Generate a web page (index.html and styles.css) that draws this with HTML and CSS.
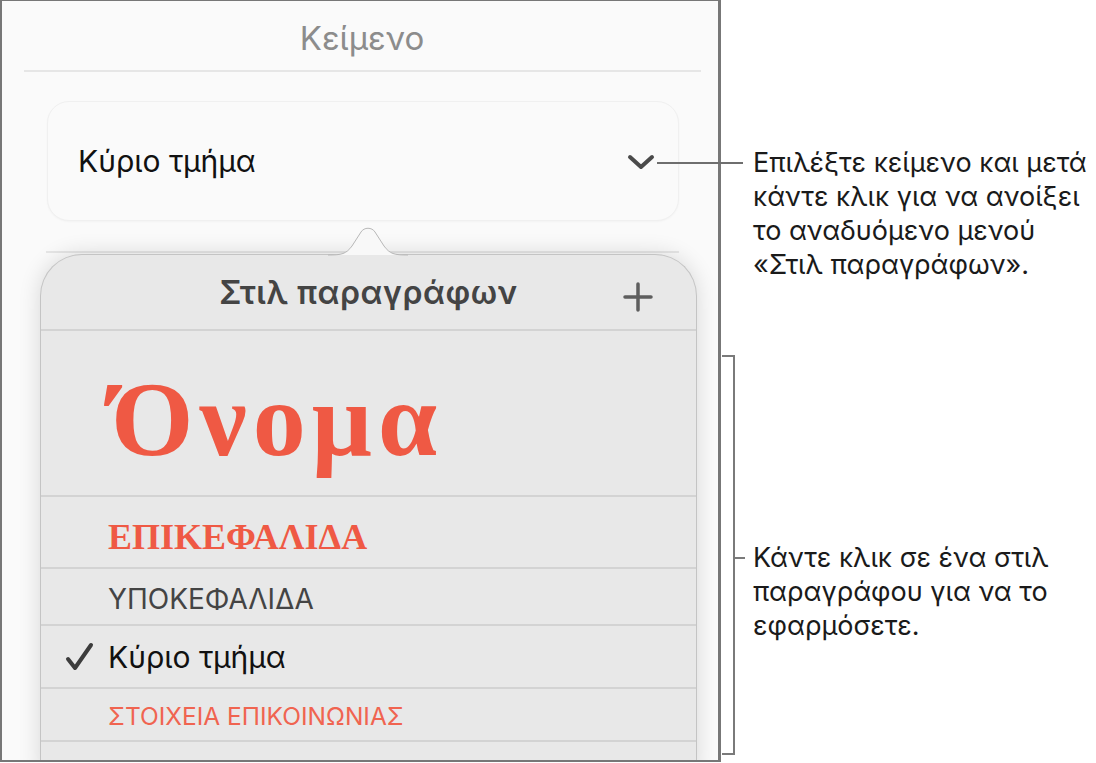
FILE: index.html
```html
<html>
    <head>
        <meta name="viewport" content="width=device-width, initial-scale=1">
        <link rel="stylesheet" href="styles.css">
    </head>

    <body>
        <div class="page">
            <div class="panel">
                <h3 class="title">Κείμενο</h3>
                <div class="rule"></div>

                <div class="picker">
                    <span>Κύριο τμήμα</span>
                    <svg class="chevron" width="30" height="18" viewBox="0 0 30 18">
                        <polyline points="4,4 15,14 26,4" fill="none" stroke="#4a4a4a" stroke-width="4" stroke-linecap="round" stroke-linejoin="round"/>
                    </svg>
                </div>
                <div class="rule rule-low"></div>

                <div class="popover">
                    <svg class="popover-tip" width="80" height="30" viewBox="0 0 80 30">
                        <path d="M0,29 C14,29 18,28 24,20 L33,6 C36,1 44,1 47,6 L56,20 C62,28 66,29 80,29" fill="#f8f8f8" stroke="#b8b8b8" stroke-width="1"/>
                    </svg>
                    <div class="popover-head">
                        <span>Στιλ παραγράφων</span>
                        <svg class="plus" width="32" height="32" viewBox="0 0 32 32">
                            <path d="M16,3 V29 M3,16 H29" stroke="#5e5e5e" stroke-width="3.5" stroke-linecap="round"/>
                        </svg>
                    </div>
                    <div class="style-row row-name"><span class="name">Όνομα</span></div>
                    <div class="style-row row-heading"><span class="heading">ΕΠΙΚΕΦΑΛΙΔΑ</span></div>
                    <div class="style-row row-sub"><span class="sub">ΥΠΟΚΕΦΑΛΙΔΑ</span></div>
                    <div class="style-row row-body">
                        <svg class="check" width="30" height="30" viewBox="0 0 30 30">
                            <polyline points="3,17 10,26 26,3" fill="none" stroke="#3c3c3c" stroke-width="4" stroke-linecap="round" stroke-linejoin="round"/>
                        </svg>
                        <span class="body-text">Κύριο τμήμα</span>
                    </div>
                    <div class="style-row row-contact"><span class="contact">ΣΤΟΙΧΕΙΑ ΕΠΙΚΟΙΝΩΝΙΑΣ</span></div>
                    <div class="style-row row-more"></div>
                </div>
            </div>

            <div class="notes">
                <div class="note note-top">
                    <div class="leader"></div>
                    <p>Επιλέξτε κείμενο και μετά<br>κάντε κλικ για να ανοίξει<br>το αναδυόμενο μενού<br>«Στιλ παραγράφων».</p>
                </div>
                <div class="note note-bracket">
                    <div class="bracket"></div>
                    <div class="note-body">
                        <div class="tick"></div>
                        <p>Κάντε κλικ σε ένα στιλ<br>παραγράφου για να το<br>εφαρμόσετε.</p>
                    </div>
                </div>
            </div>
        </div>
    </body>
</html>
```

FILE: styles.css
```css
* {
  box-sizing: border-box;
}

body {
  margin: 0;
  background: #fff;
  font-family: Inter, "Liberation Sans", Arial, sans-serif;
}

.page {
  display: flex;
  height: 763px;
  overflow: hidden;
}

/* left: the inspector panel */
.panel {
  flex: none;
  width: 721px;
  height: 762px;
  border: 2px solid #777;
  border-top-width: 1px;
  border-right-width: 3px;
  background: #fafafa;
  overflow: hidden;
}

.title {
  margin: 22px 0 0 4px;
  line-height: 30px;
  font-size: 33px;
  font-weight: normal;
  text-align: center;
  color: #8c8c8c;
}

.rule {
  height: 2px;
  margin: 17px 17px 0 22px;
  background: #e6e6e6;
}

.rule-low {
  margin: 30px 39px 0 44px;
}

.picker {
  display: flex;
  align-items: center;
  justify-content: space-between;
  height: 120px;
  margin: 29px 39px 0 45px;
  padding: 0 22px 0 30px;
  border: 1px solid #f0f0f0;
  border-radius: 22px;
  background: #fafafa;
  box-shadow: 0 1px 2px rgba(0,0,0,0.03);
  font-size: 30px;
  color: #111;
}

.chevron {
  margin-top: 2px;
}

/* popover with paragraph styles */
.popover {
  position: relative;
  width: 657px;
  height: 520px;
  margin: 1px 0 0 38px;
  border: 1px solid #c4c4c4;
  border-bottom: none;
  border-radius: 42px 42px 0 0;
  background: #e8e8e8;
  box-shadow: 0 0 22px rgba(0,0,0,0.14);
}

.popover-tip {
  position: absolute;
  top: -29px;
  left: 287px;
}

.popover-head {
  position: relative;
  height: 76px;
  display: flex;
  align-items: center;
  justify-content: center;
  border-bottom: 2px solid #d3d3d3;
  font-size: 32px;
  font-weight: 600;
  letter-spacing: 0.6px;
  color: #444;
}

.plus {
  position: absolute;
  right: 42px;
  top: 26px;
}

.style-row {
  display: flex;
  align-items: center;
  padding-left: 67px;
  border-bottom: 2px solid #d3d3d3;
}

.row-name {
  height: 166px;
  padding-left: 70px;
}

.row-heading {
  height: 72px;
  padding-top: 10px;
}

.row-sub {
  height: 57px;
  padding-top: 5px;
}

.row-body {
  height: 63px;
  padding-left: 24px;
}

.row-contact {
  height: 53px;
  padding-top: 2px;
}

.row-more {
  height: 60px;
}

.name {
  font-family: "Liberation Serif", "Times New Roman", serif;
  font-size: 106px;
  font-weight: bold;
  letter-spacing: 6px;
  color: #ef5944;
  margin-top: 14px;
}

.heading {
  font-family: "Liberation Serif", "Times New Roman", serif;
  font-size: 36px;
  font-weight: bold;
  color: #ef5944;
}

.sub {
  font-size: 28px;
  color: #444;
}

.check {
  margin-right: 13px;
}

.body-text {
  font-size: 30px;
  color: #111;
}

.contact {
  font-size: 24.5px;
  color: #f06450;
}

/* right: the callouts */
.notes {
  flex: 1;
}

.note p {
  margin: 0 0 0 10px;
  font-size: 27px;
  line-height: 34px;
  color: #1a1a1a;
}

.note-top {
  display: flex;
  margin-top: 146px;
}

.leader {
  flex: none;
  width: 86px;
  height: 2px;
  margin: 16px 0 0 -64px;
  background: #6e6e6e;
}

.note-bracket {
  display: flex;
  margin-top: 73px;
}

.bracket {
  flex: none;
  width: 13px;
  height: 400px;
  margin-left: 1px;
  border: 2px solid #7a7a7a;
  border-left: none;
}

.note-body {
  display: flex;
  margin-top: 186px;
}

.tick {
  flex: none;
  width: 10px;
  height: 2px;
  margin-top: 16px;
  background: #7a7a7a;
}

.note-body p {
  margin-left: 8px;
}
```
